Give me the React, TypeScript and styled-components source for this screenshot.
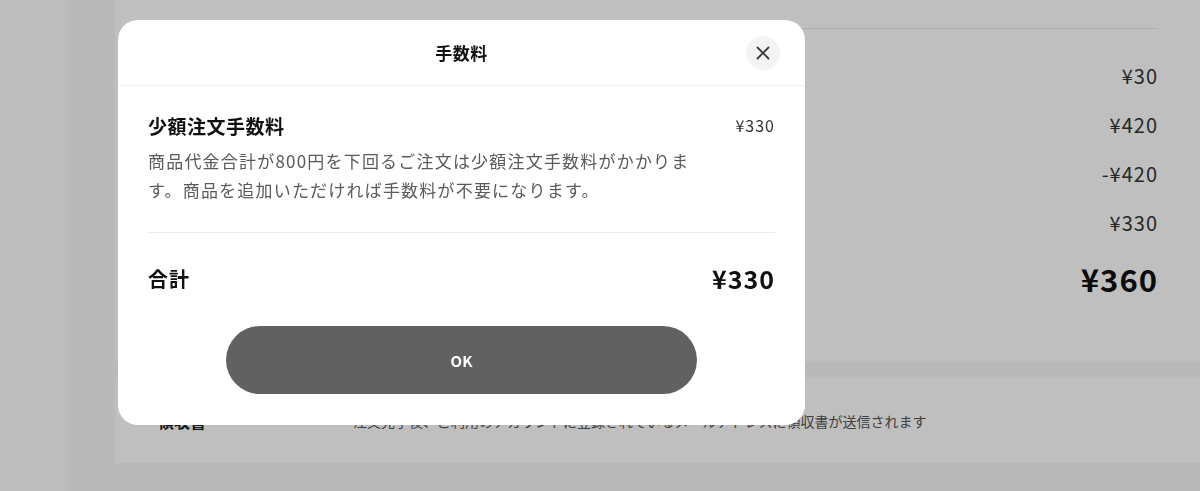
import * as React from 'react'
import styled, { createGlobalStyle } from 'styled-components'

const GlobalStyle = createGlobalStyle`
    html, body {
        margin: 0;
        padding: 0;
        height: 100%;
        overflow: hidden;
    }
    body {
        font-family: "Noto Sans CJK JP", "Noto Sans", sans-serif;
        color: #222;
        background: #fdfdfd;
    }
`

const Page = styled.div`
    display: flex;
    height: 491px;
    padding-left: 68px;
    background: #fdfdfd;
`

const Main = styled.main`
    flex: 1;
    display: flex;
    flex-direction: column;
    gap: 16px;
    padding-left: 47px;
    background: #f7f7f7;
`

const Section = styled.section`
    background: #fff;
    padding: 0 42px 0 43px;
`

const SummaryRule = styled.div`
    height: 1px;
    margin-top: 28px;
    background: #e8e8e8;
`

const SummaryList = styled.div`
    display: flex;
    flex-direction: column;
    align-items: flex-end;
    padding: 22px 0 53px;
`

const SummaryValue = styled.div<{ $total?: boolean }>`
    display: flex;
    align-items: center;
    height: ${p => (p.$total ? '62px' : '49px')};
    font-size: ${p => (p.$total ? '31px' : '20px')};
    font-weight: ${p => (p.$total ? 700 : 400)};
    letter-spacing: 1px;
    color: ${p => (p.$total ? '#111' : '#333')};
`

const ReceiptRow = styled.div`
    display: flex;
    align-items: center;
    height: 85px;
    gap: 145px;
`

const ReceiptLabel = styled.div`
    font-size: 16px;
    font-weight: 700;
    width: 50px;
`

const ReceiptText = styled.div`
    font-size: 14px;
    color: #555;
`

const Overlay = styled.div`
    position: fixed;
    inset: 0;
    background: rgba(0, 0, 0, 0.25);
    padding: 20px 0 0 118px;
`

const Modal = styled.div`
    width: 687px;
    background: #fff;
    border-radius: 20px;
    overflow: hidden;
`

const ModalHeader = styled.header`
    display: grid;
    grid-template-columns: 1fr auto 1fr;
    align-items: center;
    height: 65px;
    padding: 0 25px;
    border-bottom: 1px solid #efefef;
`

const ModalTitle = styled.h2`
    grid-column: 2;
    margin: 0;
    font-size: 17px;
    font-weight: 700;
    letter-spacing: 0.5px;
    color: #111;
`

const CloseButton = styled.button`
    justify-self: end;
    display: flex;
    align-items: center;
    justify-content: center;
    width: 34px;
    height: 34px;
    padding: 0;
    border: none;
    border-radius: 50%;
    background: #f4f4f4;
    color: #3a3a3a;
    cursor: pointer;
`

const ModalBody = styled.div`
    padding: 25px 30px 31px;
`

const FeeRow = styled.div`
    display: flex;
    justify-content: space-between;
    align-items: center;
    height: 28px;
`

const FeeName = styled.div`
    font-size: 19px;
    font-weight: 700;
    letter-spacing: 0.5px;
    color: #111;
`

const FeePrice = styled.div`
    font-size: 16px;
    letter-spacing: 1px;
    color: #333;
`

const FeeNote = styled.p`
    margin: 7px 0 0;
    width: 552px;
    font-size: 17px;
    line-height: 29px;
    letter-spacing: 1.2px;
    color: #5a5a5a;
`

const Divider = styled.hr`
    margin: 28px 0 0;
    border: none;
    height: 1px;
    background: #ececec;
`

const TotalRow = styled.div`
    display: flex;
    justify-content: space-between;
    align-items: center;
    height: 30px;
    margin-top: 30px;
    font-weight: 700;
    color: #111;
`

const TotalLabel = styled.div`
    font-size: 20px;
    letter-spacing: 1px;
`

const TotalPrice = styled.div`
    font-size: 25px;
    letter-spacing: 1px;
`

const OkButton = styled.button`
    display: block;
    width: 471px;
    height: 68px;
    margin: 33px auto 0;
    border: none;
    border-radius: 34px;
    background: #616161;
    color: #fff;
    font-family: inherit;
    font-size: 15px;
    font-weight: 700;
    cursor: pointer;
`

const summary = ['¥30', '¥420', '-¥420', '¥330']

export default function App() {
    return (
        <>
            <GlobalStyle />
            <Page>
                <Main>
                    <Section>
                        <SummaryRule />
                        <SummaryList>
                            {summary.map(value => (
                                <SummaryValue key={value}>{value}</SummaryValue>
                            ))}
                            <SummaryValue $total>¥360</SummaryValue>
                        </SummaryList>
                    </Section>
                    <Section>
                        <ReceiptRow>
                            <ReceiptLabel>領収書</ReceiptLabel>
                            <ReceiptText>
                                注文完了後、ご利用のアカウントに登録されているメールアドレスに領収書が送信されます
                            </ReceiptText>
                        </ReceiptRow>
                    </Section>
                </Main>
            </Page>
            <Overlay>
                <Modal>
                    <ModalHeader>
                        <ModalTitle>手数料</ModalTitle>
                        <CloseButton aria-label="閉じる">
                            <svg width="14" height="14" viewBox="0 0 14 14" fill="none" stroke="currentColor" strokeWidth="1.8" strokeLinecap="round">
                                <path d="M1.5 1.5l11 11M12.5 1.5l-11 11" />
                            </svg>
                        </CloseButton>
                    </ModalHeader>
                    <ModalBody>
                        <FeeRow>
                            <FeeName>少額注文手数料</FeeName>
                            <FeePrice>¥330</FeePrice>
                        </FeeRow>
                        <FeeNote>
                            商品代金合計が800円を下回るご注文は少額注文手数料がかかります。商品を追加いただければ手数料が不要になります。
                        </FeeNote>
                        <Divider />
                        <TotalRow>
                            <TotalLabel>合計</TotalLabel>
                            <TotalPrice>¥330</TotalPrice>
                        </TotalRow>
                        <OkButton>OK</OkButton>
                    </ModalBody>
                </Modal>
            </Overlay>
        </>
    )
}
